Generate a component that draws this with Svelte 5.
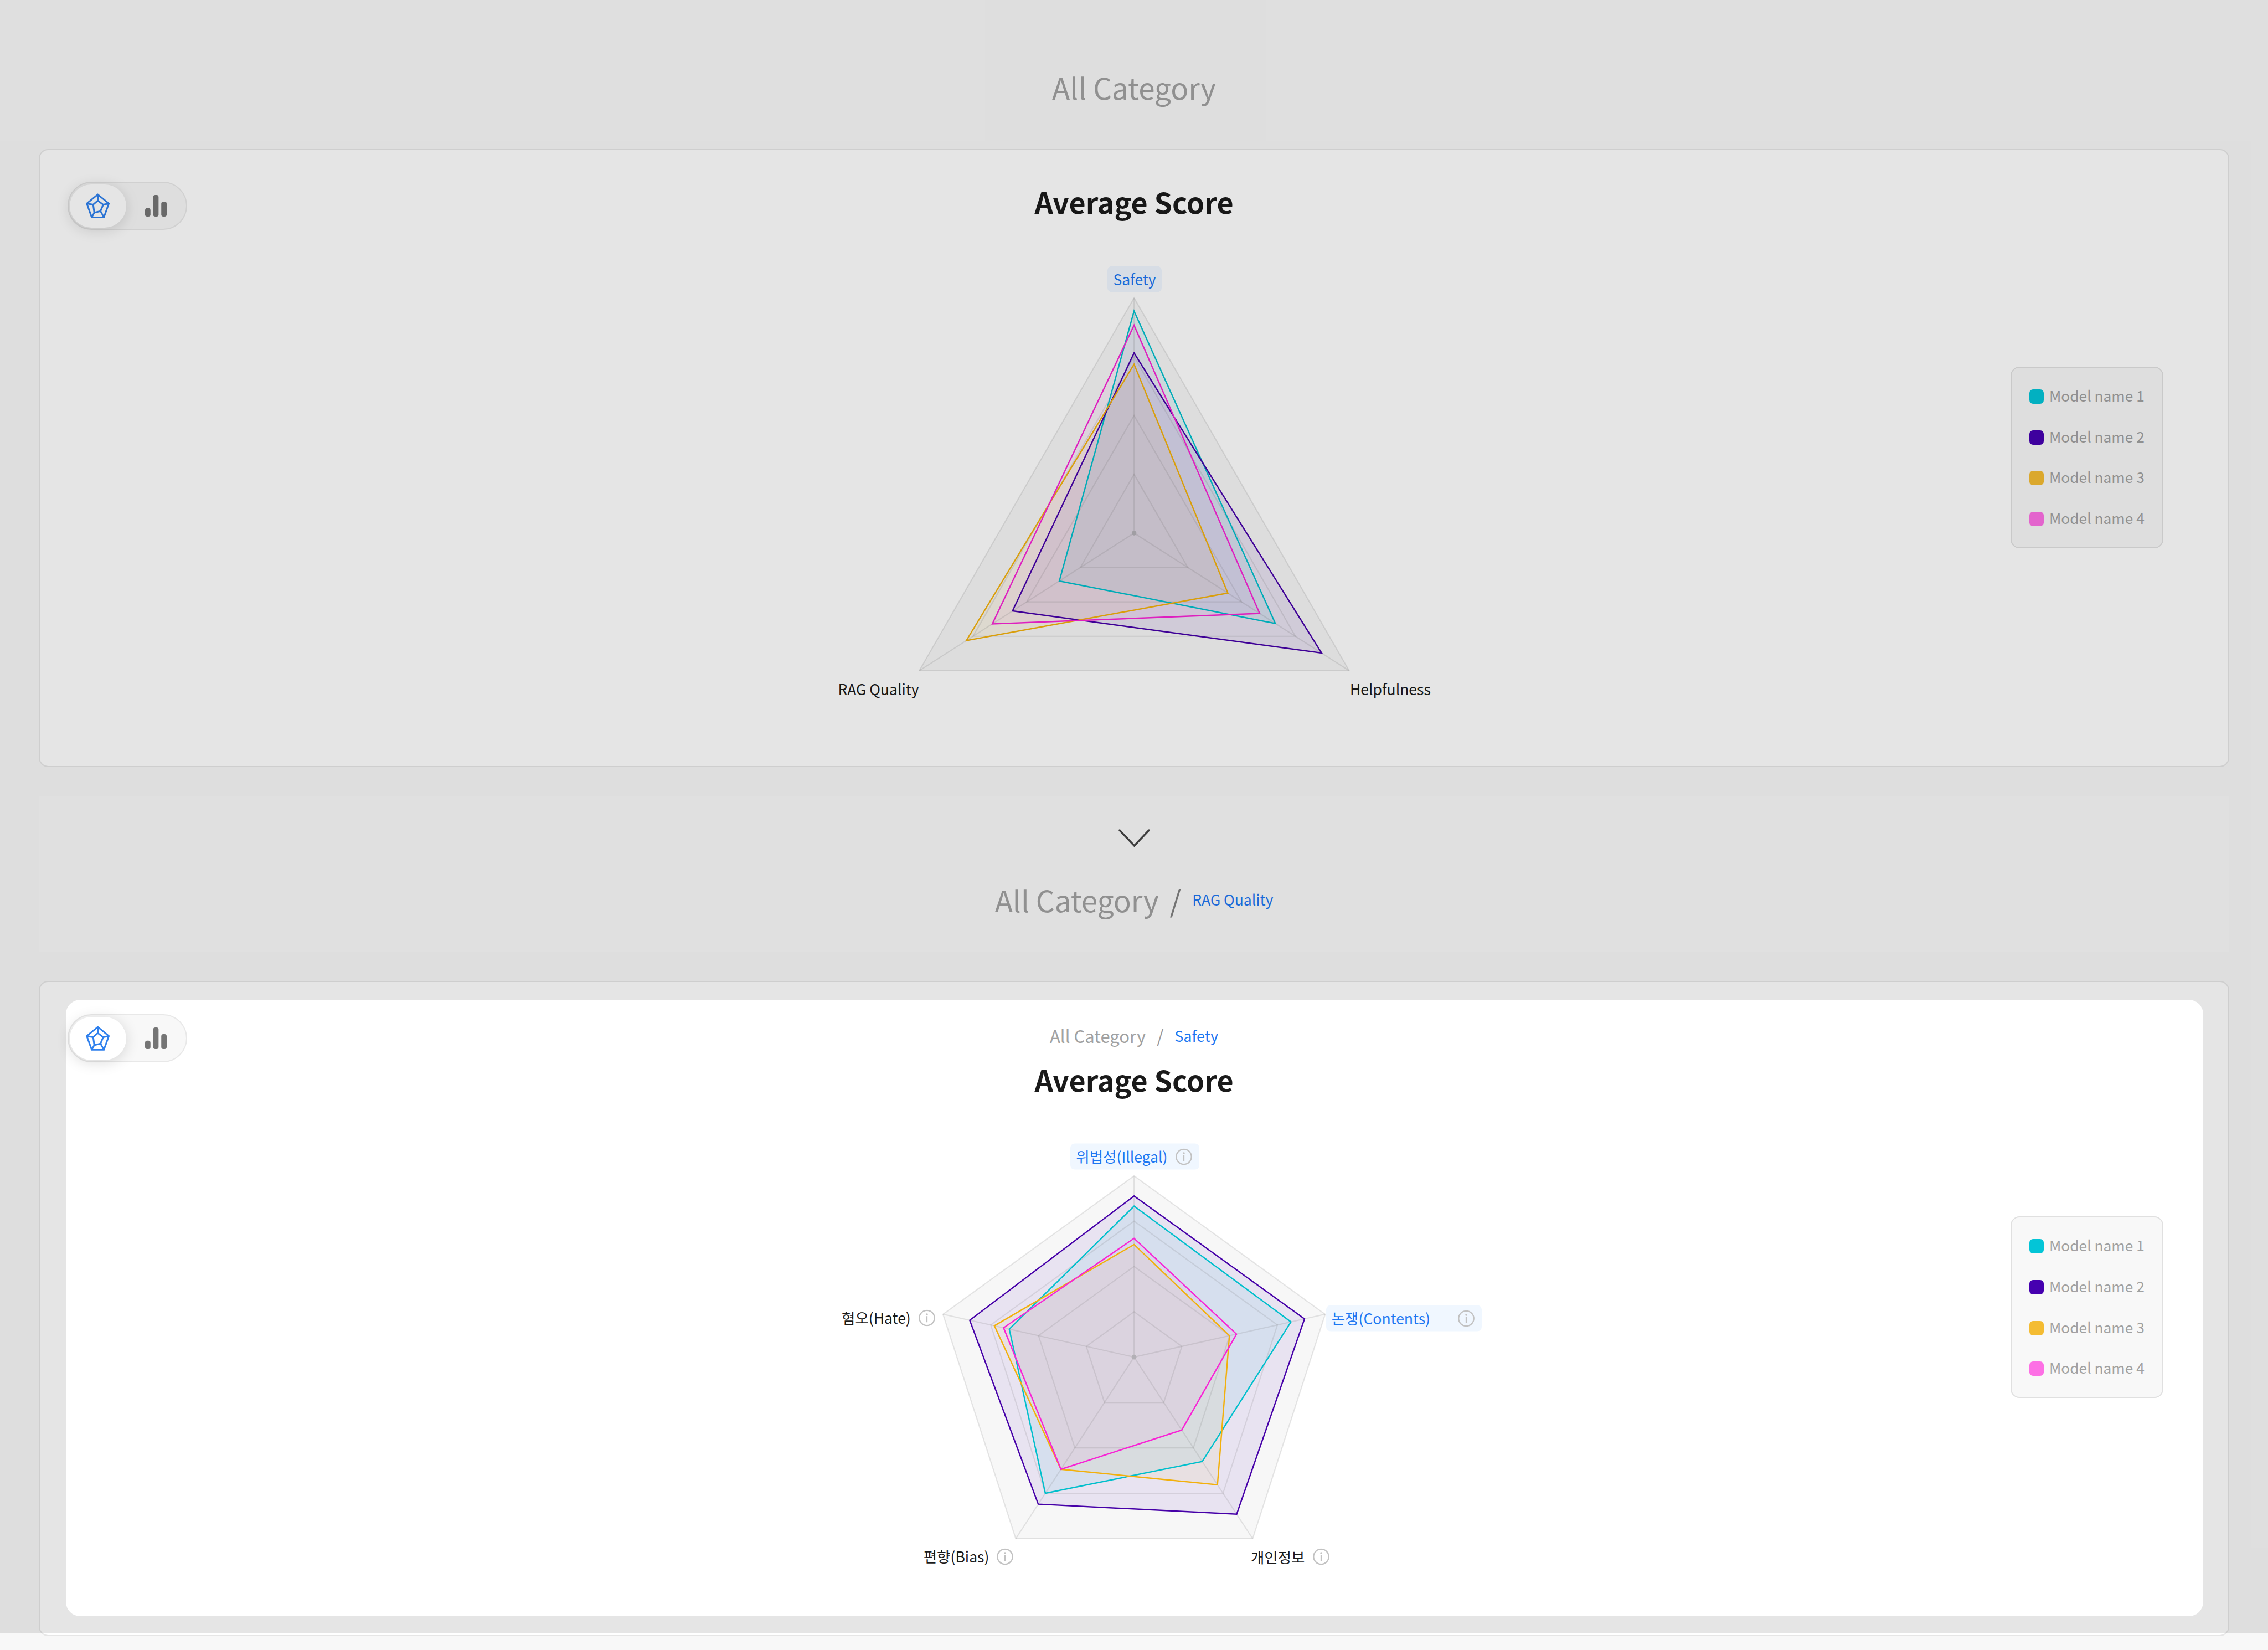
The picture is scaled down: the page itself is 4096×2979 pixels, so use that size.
<script>
  // reference px -> window px
  const S = 4096 / 7572;

  const models = [
    { name: 'Model name 1', swatch: '#03c5d7', line: '#00bfcc' },
    { name: 'Model name 2', swatch: '#4600b0', line: '#4600a8' },
    { name: 'Model name 3', swatch: '#f4bc33', line: '#f2b00c' },
    { name: 'Model name 4', swatch: '#fd70e5', line: '#f823d5' }
  ];

  const overview = {
    width: 2400,
    height: 1500,
    cx: 1200,
    cy: 929,
    axes: [[0, -785], [718, 459], [-717, 459]],
    scores: [
      [0.944, 0.657, 0.348],
      [0.766, 0.872, 0.566],
      [0.718, 0.436, 0.781],
      [0.884, 0.584, 0.66]
    ],
    labels: [
      { text: 'Safety', x: 1112, y: 81, active: true },
      { text: 'Helpfulness', x: 1921, y: 1449 },
      { text: 'RAG Quality', x: 212, y: 1449 }
    ]
  };

  const detail = {
    width: 2400,
    height: 1500,
    cx: 1200,
    cy: 749,
    axes: [[0, -605], [638, -143], [396, 606], [-395, 606], [-638, -143]],
    scores: [
      [0.833, 0.821, 0.575, 0.75, 0.653],
      [0.889, 0.892, 0.865, 0.81, 0.86],
      [0.621, 0.499, 0.703, 0.618, 0.731],
      [0.655, 0.536, 0.402, 0.618, 0.683]
    ],
    labels: [
      { text: '위법성(Illegal)', x: 988, y: 79, active: true, info: true },
      { text: '논쟁(Contents)', x: 1841, y: 619, active: true, info: true, wide: true },
      { text: '개인정보', x: 1590, y: 1415, info: true },
      { text: '편향(Bias)', x: 497, y: 1414, info: true },
      { text: '혐오(Hate)', x: 224, y: 617, info: true }
    ]
  };

  const rings = [0.25, 0.5, 0.75, 1];

  function points(chart, values) {
    return chart.axes
      .map(([dx, dy], i) => `${chart.cx + dx * values[i]},${chart.cy + dy * values[i]}`)
      .join(' ');
  }

  const ring = (chart, v) => points(chart, chart.axes.map(() => v));
</script>

{#snippet toggle()}
  <div class="toggle">
    <button class="toggle-btn on" aria-label="Radar chart">
      <svg class="icon-radar" viewBox="0 0 83 83">
        <path d="M41.700 4 78.500 34 62 80H21.500L5 34Z" />
        <path d="M41.700 24.300 59.700 37.700 50.700 59.300 30 64.300 26.300 37.700Z" />
        <path d="M41.700 4V24.300M78.500 34 59.700 37.700M62 80 50.700 59.300M21.500 80 30 64.300M5 34 26.300 37.700" />
      </svg>
    </button>
    <button class="toggle-btn" aria-label="Bar chart">
      <svg class="icon-bars" viewBox="0 0 72 72">
        <rect x="0" y="44" width="18" height="28" rx="7" />
        <rect x="27" y="0" width="18" height="72" rx="7" />
        <rect x="54" y="22" width="18" height="50" rx="7" />
      </svg>
    </button>
  </div>
{/snippet}

{#snippet legend()}
  <ul class="legend">
    {#each models as m}
      <li><span class="swatch" style="background: {m.swatch}"></span><span class="legend-name">{m.name}</span></li>
    {/each}
  </ul>
{/snippet}

{#snippet radar(chart)}
  <div class="radar" style="width: {chart.width * S}px; height: {chart.height * S}px">
    <svg width={chart.width * S} height={chart.height * S} viewBox="0 0 {chart.width} {chart.height}">
      <polygon class="backdrop" points={ring(chart, 1)} />
      {#each chart.scores as values, i}
        <polygon points={points(chart, values)} fill={models[i].swatch} fill-opacity="0.08" />
      {/each}
      {#each rings as v}
        <polygon class="grid" points={ring(chart, v)} />
      {/each}
      {#each chart.axes as [dx, dy]}
        <line class="grid" x1={chart.cx} y1={chart.cy} x2={chart.cx + dx} y2={chart.cy + dy} />
      {/each}
      <circle class="hub" cx={chart.cx} cy={chart.cy} r="8" />
      {#each chart.scores as values, i}
        <polygon class="series" points={points(chart, values)} stroke={models[i].line} />
      {/each}
    </svg>
    {#each chart.labels as label}
      <div
        class="axis-label"
        class:active={label.active}
        class:wide={label.wide}
        style="left: {label.x * S}px; top: {label.y * S}px"
      >
        <span class="axis-text">{label.text}</span>
        {#if label.info}
          <svg class="info" viewBox="0 0 30 30">
            <circle cx="15" cy="15" r="13.700" />
            <circle class="dot" cx="15" cy="8.500" r="1.800" />
            <path d="M15 11.800V22.800" />
          </svg>
        {/if}
      </div>
    {/each}
  </div>
{/snippet}

<div class="page">
  <div class="dim"></div>

  <header class="top-head">
    <h2 class="section-title">All Category</h2>
  </header>

  <section class="card">
    <div class="panel panel-overview">
      <div class="cell-left">{@render toggle()}</div>
      <div class="cell-center">
        <h1 class="chart-title">Average Score</h1>
        {@render radar(overview)}
      </div>
      <div class="cell-right">{@render legend()}</div>
    </div>
  </section>

  <div class="drill">
    <svg class="chevron" viewBox="0 0 59 34">
      <path d="M3 3 29.500 31 56 3" />
    </svg>
    <div class="drill-crumb">
      <h2 class="section-title">All Category</h2>
      <span class="drill-slash">/</span>
      <span class="drill-current">RAG Quality</span>
    </div>
  </div>

  <section class="card card-detail">
    <div class="panel panel-detail">
      <div class="cell-left">{@render toggle()}</div>
      <div class="cell-center">
        <div class="crumb">
          <span>All Category</span>
          <span class="crumb-slash">/</span>
          <span class="crumb-current">Safety</span>
        </div>
        <h1 class="chart-title">Average Score</h1>
        {@render radar(detail)}
      </div>
      <div class="cell-right">{@render legend()}</div>
    </div>
  </section>
</div>

<style>
  :global(body) {
    margin: 0;
    background: #f8f8f8;
  }

  .page {
    position: relative;
    min-height: 2979px;
    background: #f8f8f8;
    font-family: "Noto Sans CJK KR", "Noto Sans", sans-serif;
    color: #1a1a1a;
  }

  /* dims everything but the selected panel */
  .dim {
    position: absolute;
    top: 0;
    left: 0;
    right: 0;
    height: 2949px;
    background: rgba(0, 0, 0, 0.1);
    z-index: 1;
    pointer-events: none;
  }

  .top-head {
    display: flex;
    justify-content: center;
    padding: 119px 0 74px;
  }

  .section-title {
    margin: 0;
    font-size: 53px;
    line-height: 76px;
    font-weight: 400;
    color: #a1a1a1;
  }

  .card {
    margin: 0 70px;
    background: #fff;
    border: 2px solid #e6e6e6;
    border-radius: 17px;
  }

  .card-detail {
    padding: 32px 45px 34px 47px;
  }

  .panel {
    display: grid;
    grid-template-columns: 1fr auto 1fr;
  }

  .panel-detail {
    position: relative;
    z-index: 2;
    background: #fff;
    border-radius: 26px;
    padding: 0 2px 61px 0;
  }

  .panel-overview {
    padding-bottom: 112px;
  }

  .cell-left {
    padding: 57px 0 0 50px;
  }

  .panel-detail .cell-left {
    padding: 26px 0 0 3px;
  }

  .cell-center {
    display: flex;
    flex-direction: column;
    align-items: center;
    padding-top: 54.500px;
  }

  .panel-detail .cell-center {
    padding-top: 42.500px;
  }

  .cell-right {
    display: flex;
    justify-content: flex-end;
    align-items: flex-start;
    padding: 391px 117px 0 0;
  }

  .panel-detail .cell-right {
    padding-right: 70px;
  }

  .chart-title {
    margin: 0 0 58.500px;
    font-size: 52px;
    line-height: 76px;
    font-weight: 700;
    color: #1a1a1a;
  }

  .toggle {
    display: flex;
    align-items: center;
    box-sizing: border-box;
    width: 216px;
    height: 87px;
    padding: 0 1.500px;
    background: #f8f8f8;
    border: 2px solid #e8e8e8;
    border-radius: 44px;
  }

  .toggle-btn {
    display: flex;
    align-items: center;
    justify-content: center;
    flex: 1;
    height: 78px;
    padding: 0;
    border: 0;
    background: transparent;
    border-radius: 39px;
  }

  .toggle-btn.on {
    flex: 0 0 102px;
    background: #fff;
    box-shadow: 0 4px 26px rgba(0, 0, 0, 0.14);
  }

  .icon-radar {
    width: 45px;
    height: 45px;
    fill: none;
    stroke: #2f80ed;
    stroke-width: 5.500;
  }

  .icon-bars {
    width: 39px;
    height: 39px;
    fill: #757575;
  }

  .legend {
    display: flex;
    flex-direction: column;
    gap: 47.600px;
    box-sizing: border-box;
    width: 276px;
    height: 328px;
    margin: 0;
    padding: 39px 0 0 32px;
    list-style: none;
    background: #f8f8f8;
    border: 2px solid #e0e0e0;
    border-radius: 16px;
  }

  .legend li {
    display: flex;
    align-items: center;
    gap: 10px;
    height: 26px;
    font-size: 26.300px;
    color: #a1a1a1;
  }

  .legend-name {
    padding-bottom: 5px;
  }

  .swatch {
    width: 26px;
    height: 26px;
    border-radius: 6.500px;
  }

  .radar {
    position: relative;
  }

  .radar > svg {
    display: block;
  }

  .backdrop {
    fill: #f7f7f7;
  }

  .grid {
    fill: none;
    stroke: rgba(110, 110, 110, 0.17);
    stroke-width: 4;
  }

  .hub {
    fill: #b3b0b6;
  }

  .series {
    fill: none;
    stroke-width: 4.500;
  }

  .axis-label {
    position: absolute;
    display: flex;
    align-items: center;
    gap: 14px;
    transform: translateY(-50%);
    font-size: 26.500px;
    line-height: 47px;
    white-space: nowrap;
    color: #1a1a1a;
  }

  .axis-text {
    position: relative;
    top: -1px;
  }

  .axis-label.active {
    padding: 0 10px;
    color: #1d77f2;
    background: #f0f7ff;
    border-radius: 8px;
  }

  .axis-label.wide {
    box-sizing: border-box;
    width: 281px;
    justify-content: space-between;
  }

  .info {
    width: 30px;
    height: 30px;
    fill: none;
    stroke: #c2c2c2;
    stroke-width: 2.300;
  }

  .active .info {
    margin-right: 3px;
  }

  .info .dot {
    fill: #c2c2c2;
    stroke: none;
  }

  .drill {
    display: flex;
    flex-direction: column;
    align-items: center;
    margin: 52px 70px;
    padding: 59px 0 55px;
    background: #fafafa;
  }

  .chevron {
    width: 59px;
    height: 34px;
    margin-bottom: 56px;
    fill: none;
    stroke: #444;
    stroke-width: 3.500;
    stroke-linecap: round;
  }

  .drill-crumb {
    display: flex;
    align-items: center;
    gap: 20px;
    padding-bottom: 2px;
  }

  .drill-slash {
    font-size: 53px;
    line-height: 76px;
    color: #808080;
  }

  .drill-current {
    font-size: 26.500px;
    line-height: 76px;
    color: #1d77f2;
  }

  .crumb {
    display: flex;
    gap: 20px;
    margin-bottom: 19px;
    font-size: 31px;
    line-height: 44px;
    color: #a1a1a1;
  }

  .crumb-slash {
    color: #999;
  }

  .crumb-current {
    font-size: 27px;
    color: #1d77f2;
  }
</style>
